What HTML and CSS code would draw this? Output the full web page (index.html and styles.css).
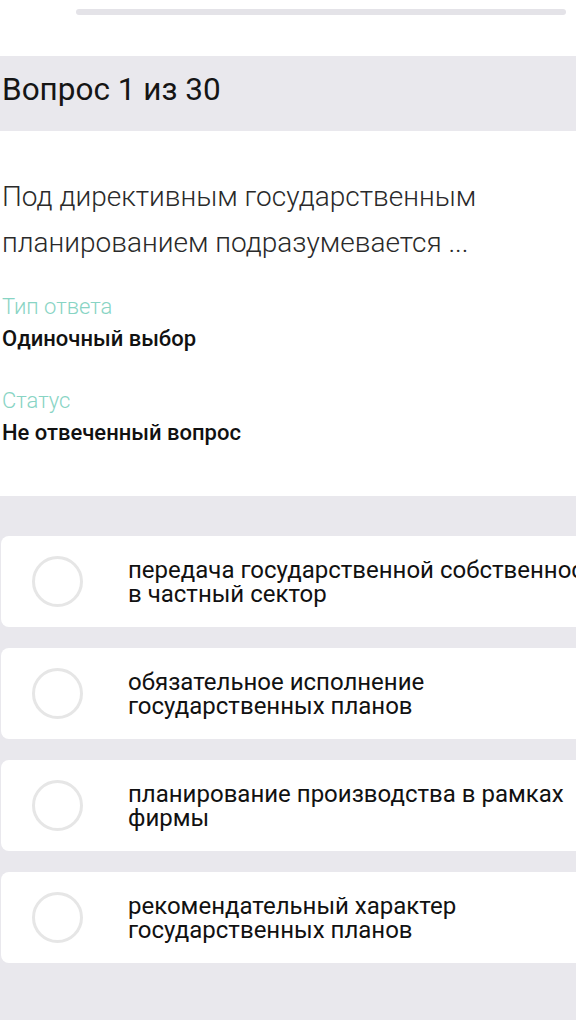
FILE: index.html
```html
<!DOCTYPE html>
<html lang="ru">
<head>
    <meta charset="UTF-8">
    <meta name="viewport" content="width=device-width, initial-scale=1.0">
    <title>Вопрос 1 из 30</title>
    <link rel="stylesheet" href="styles.css">
</head>
<body>
    <div class="progress">
        <div class="progress-track"></div>
    </div>

    <div class="header">
        <h1>Вопрос 1 из 30</h1>
    </div>

    <div class="question">
        <p class="question-text">Под директивным государственным<br>планированием подразумевается ...</p>

        <div class="meta">
            <div class="meta-label">Тип ответа</div>
            <div class="meta-value">Одиночный выбор</div>
        </div>
        <div class="meta">
            <div class="meta-label">Статус</div>
            <div class="meta-value">Не отвеченный вопрос</div>
        </div>
    </div>

    <div class="answers">
        <div class="answer">
            <span class="radio"></span>
            <span class="answer-text">передача государственной собственности<br>в частный сектор</span>
        </div>
        <div class="answer">
            <span class="radio"></span>
            <span class="answer-text">обязательное исполнение<br>государственных планов</span>
        </div>
        <div class="answer">
            <span class="radio"></span>
            <span class="answer-text">планирование производства в рамках<br>фирмы</span>
        </div>
        <div class="answer">
            <span class="radio"></span>
            <span class="answer-text">рекомендательный характер<br>государственных планов</span>
        </div>
    </div>
</body>
</html>
```

FILE: styles.css
```css
html, body {
    margin: 0;
    padding: 0;
    overflow: hidden;
}
body {
    font-family: Roboto, "Noto Sans", "Liberation Sans", sans-serif;
    background-color: #fff;
    color: #111;
    width: 576px;
    height: 1020px;
}
.progress {
    padding: 9px 10px 0 76px;
    height: 56px;
    box-sizing: border-box;
}
.progress-track {
    height: 6px;
    border-radius: 3px;
    background-color: #e4e3e8;
}
.header {
    background-color: #e9e8ed;
    height: 75px;
    display: flex;
    align-items: center;
    padding-left: 2px;
}
.header h1 {
    margin: 0;
    font-size: 31.5px;
    font-weight: 400;
    color: #151515;
    position: relative;
    top: -4px;
}
.question {
    padding: 0 0 47px 2px;
}
.question-text {
    margin: 0;
    padding-top: 43px;
    font-size: 28px;
    font-weight: 300;
    line-height: 46px;
    color: #2a2a2a;
    white-space: nowrap;
}
.meta {
    margin-top: 25px;
}
.meta + .meta {
    margin-top: 30px;
}
.meta-label {
    font-size: 22px;
    font-weight: 300;
    color: #88d4c4;
    line-height: 32px;
}
.meta-value {
    font-size: 22px;
    font-weight: 500;
    color: #111;
    line-height: 32px;
}
.answers {
    background-color: #e9e8ed;
    padding: 40px 0 0 1px;
    height: 484px;
    overflow: hidden;
}
.answer {
    width: 600px;
    height: 91px;
    background-color: #fff;
    border-radius: 8px;
    display: flex;
    align-items: center;
    margin-bottom: 21px;
}
.radio {
    width: 45px;
    height: 45px;
    border: 3px solid #e6e6e6;
    border-radius: 50%;
    margin-left: 31px;
    flex-shrink: 0;
}
.answer-text {
    margin-left: 45px;
    font-size: 24px;
    line-height: 24px;
    color: #111;
    white-space: nowrap;
}
```
